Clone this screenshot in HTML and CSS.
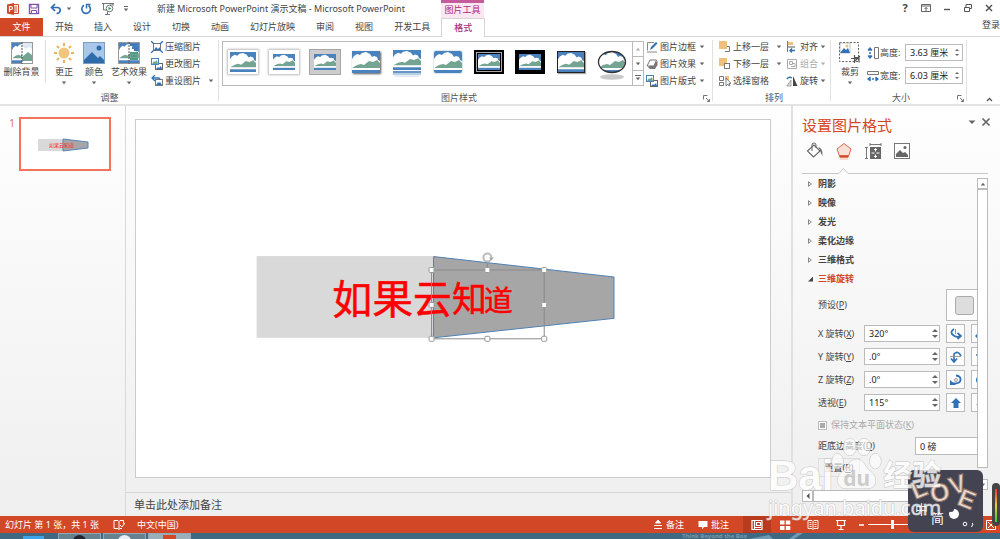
FILE: index.html
```html
<!DOCTYPE html>
<html lang="zh-CN">
<head>
<meta charset="utf-8">
<title>新建 Microsoft PowerPoint 演示文稿 - Microsoft PowerPoint</title>
<link rel="stylesheet" href="styles.css">
</head>
<body>
<svg class="defs" aria-hidden="true">
  <symbol id="pic" viewBox="0 0 28 22" preserveAspectRatio="none">
    <rect width="28" height="22" fill="#fff"/>
    <path d="M0 0h28v10l-2-1-1-3-3-1-2 1-2-3-4-2-4 1-2 2-3-1-3 2-2 3-2 0z" fill="#4a82bd"/>
    <path d="M0 17l5-3 4-1 3 1 5-4 4 1 4-2 3 3v5z" fill="#74a593"/>
    <path d="M0 17h28v2H0z" fill="#fff"/>
    <rect y="19" width="28" height="3" fill="#4a82bd"/>
  </symbol>
  <symbol id="down" viewBox="0 0 6 4"><path d="M0.8 0.5h4.4L3 3.3z" fill="#666"/></symbol>
  <symbol id="launch" viewBox="0 0 7 7"><path d="M.5 4.5v-4h4M3 3l2.5 2.5" fill="none" stroke="#777"/><path d="M7 3.5V7H3.5z" fill="#777"/></symbol>
  <symbol id="minipic" viewBox="0 0 12 12">
    <rect x="4.500" y="5.500" width="7" height="6" fill="#fff" stroke="#666"/><path d="M5 11l2-2 1 1 2-2 1 3z" fill="#2f72b8"/>
    <rect x=".5" y=".5" width="7" height="6" fill="#fff" stroke="#4a82bd"/><path d="M1 6l2-3 1 1 2-2 1 4z" fill="#74a593"/>
  </symbol>
</svg>

<div class="app">
  <header class="titlebar">
    <div class="qat">
      <svg class="i14" viewBox="0 0 14 14"><path d="M1 2.500L8 1v12L1 11.500z" fill="#d24726"/><path d="M8 2.500h4.500v9H8" fill="#fff" stroke="#d24726"/><path d="M8 5h3M8 7h3M8 9h3" stroke="#d24726"/><path d="M3.500 10V4.500h1.500a1.500 1.500 0 0 1 0 3H3.500" fill="none" stroke="#fff" stroke-width="1.200"/></svg>
      <button aria-label="保存"><svg class="i12" viewBox="0 0 12 12"><path d="M1.500 1.500h9v9h-9z" fill="#fff" stroke="#8055a8" stroke-width="1.400"/><path d="M3 1.500h6v3.500H3zM3.500 7.500h5v3h-5z" fill="#fff" stroke="#8055a8"/></svg></button>
      <button class="undo" aria-label="撤消"><svg class="i12" viewBox="0 0 12 12"><path d="M5 1L1.500 4.500 5 8M2 4.500h5.500c4 0 3.500 6-1 6" fill="none" stroke="#2f6db5" stroke-width="1.700"/></svg><svg class="dn"><use href="#down"/></svg></button>
      <button aria-label="重复"><svg class="i12" viewBox="0 0 12 12"><path d="M8.500 2.500A4.300 4.300 0 1 1 4 2.300" fill="none" stroke="#2f6db5" stroke-width="1.600"/><path d="M6.500 5.500V1.500h4" fill="none" stroke="#2f6db5" stroke-width="1.500"/></svg></button>
      <button class="show" aria-label="从头开始"><svg class="i14" viewBox="0 0 14 14"><path d="M1 1.500h12M2.500 2v6h4M6.500 9v3M4 12.500h5M9 2h3v2" fill="none" stroke="#777"/><circle cx="8.500" cy="6.500" r="3.300" fill="#fff" stroke="#777"/><path d="M7.500 4.700l3 1.800-3 1.800z" fill="#3c9b62"/></svg></button>
      <button aria-label="自定义快速访问工具栏"><svg class="i6" viewBox="0 0 6 6"><path d="M1 .5h4" stroke="#666"/><path d="M.8 2.500h4.400L3 5.300z" fill="#666"/></svg></button>
    </div>
    <h1 class="doc-title">新建 Microsoft PowerPoint 演示文稿 - Microsoft PowerPoint</h1>
    <div class="context-title">图片工具</div>
    <div class="win">
      <button aria-label="帮助" class="help">?</button>
      <button aria-label="功能区显示选项"><svg class="i10" viewBox="0 0 10 10"><path d="M.5 1.500h9v7h-9zM.5 3h9M5 8V4.500M3.500 6L5 4.500 6.500 6" fill="none" stroke="#666"/></svg></button>
      <button aria-label="最小化"><svg class="i10" viewBox="0 0 10 10"><path d="M2 6.500h6" stroke="#555" stroke-width="1.400"/></svg></button>
      <button aria-label="还原"><svg class="i10" viewBox="0 0 10 10"><path d="M1.500 4.500h5v4h-5zM3 4V1.500h5.500v4H7" fill="none" stroke="#555"/></svg></button>
      <button aria-label="关闭"><svg class="i10" viewBox="0 0 10 10"><path d="M2 2l6 6M8 2L2 8" stroke="#555" stroke-width="1.500"/></svg></button>
    </div>
  </header>

  <nav class="tabs">
    <button class="tab file">文件</button>
    <button class="tab">开始</button><button class="tab">插入</button><button class="tab">设计</button><button class="tab">切换</button><button class="tab">动画</button><button class="tab">幻灯片放映</button><button class="tab">审阅</button><button class="tab">视图</button><button class="tab">开发工具</button>
    <button class="tab active">格式</button>
    <a class="login" href="#">登录</a>
  </nav>

  <section class="ribbon">
    <div class="group g-adjust">
      <div class="tools">
        <button class="big w42"><svg class="i22" viewBox="0 0 22 22"><use href="#pic" x="1" y="1" width="20" height="20"/><rect x="11" y="1" width="10" height="20" fill="#fff"/><path d="M11 1h10v6l-3-2-3 2-4-3z" fill="#dfe9f4"/><path d="M11 15l6-5 4 3v6H11z" fill="#74a593"/><rect x=".5" y=".5" width="21" height="21" fill="none" stroke="#999"/><path d="M11 0v22" stroke="#555" stroke-dasharray="2 1"/></svg><span>删除背景</span></button>
        <i class="sep"></i>
        <button class="big w30"><svg class="i22" viewBox="0 0 22 22"><circle cx="11" cy="11" r="5.500" fill="#efc67c"/><g stroke="#e9b65f" stroke-width="2.200"><path d="M11 1v3M11 18v3M1 11h3M18 11h3M4 4l2 2M16 16l2 2M4 18l2-2M16 6l2-2"/></g></svg><span>更正</span><svg class="dn"><use href="#down"/></svg></button>
        <button class="big w30"><svg class="i22" viewBox="0 0 22 22"><rect x=".5" y=".5" width="21" height="21" fill="#a9c7e8" stroke="#7d9dc0"/><path d="M1 18l8-8 6 6 2-2 4 4v3H1z" fill="#2e6cac"/><circle cx="16" cy="6" r="2.500" fill="#2e6cac"/></svg><span>颜色</span><svg class="dn"><use href="#down"/></svg></button>
        <button class="big w40"><svg class="i22" viewBox="0 0 22 22"><use href="#pic" x="1" y="1" width="20" height="20"/><path d="M12 11h8M13 14h6M12 17h8" fill="none" stroke="#4d9c88" stroke-width="2"/><path d="M12 3h7M14 6h6M16 8h4" fill="none" stroke="#3c78bd" stroke-width="2"/><rect x=".5" y=".5" width="21" height="21" fill="none" stroke="#999"/><path d="M11 0v22" stroke="#555" stroke-dasharray="2 1"/></svg><span>艺术效果</span><svg class="dn"><use href="#down"/></svg></button>
        <div class="rows">
          <button class="row"><svg class="i12" viewBox="0 0 12 12"><rect x="2.500" y="2.500" width="7" height="7" fill="#fff" stroke="#777"/><path d="M3 9l2-3 2 2 2-2v3z" fill="#2f72b8"/><path d="M0 0l3 3M12 0L9 3M0 12l3-3M12 12L9 9" stroke="#2f72b8" stroke-width="1.300"/></svg><span>压缩图片</span></button>
          <button class="row"><svg class="i12"><use href="#minipic"/></svg><span>更改图片</span></button>
          <button class="row"><svg class="i12" viewBox="0 0 12 12"><rect x="4.500" y="4.500" width="7" height="6" fill="#fff" stroke="#777"/><path d="M5 10l2-3 1 1 1-1 2 3z" fill="#2f72b8"/><path d="M4 0L1 3l3 3M1 3h6q2 0 2 1.500" fill="none" stroke="#2f72b8" stroke-width="1.300"/></svg><span>重设图片</span><svg class="dn gap"><use href="#down"/></svg></button>
        </div>
      </div>
      <div class="caption">调整</div>
    </div>

    <div class="group g-styles">
      <div class="tools">
        <div class="gallery">
          <button class="thumb" aria-label="简单框架，白色"><svg class="frame white"><use href="#pic"/></svg></button>
          <button class="thumb" aria-label="棱台亚光，白色"><svg class="frame white thick"><use href="#pic"/></svg></button>
          <button class="thumb" aria-label="金属框架"><svg class="frame metal"><use href="#pic"/></svg></button>
          <button class="thumb" aria-label="矩形投影"><svg class="frame shadow"><use href="#pic"/></svg></button>
          <button class="thumb" aria-label="映像圆角矩形"><svg class="frame reflect" viewBox="0 0 28 28"><use href="#pic" width="28" height="20"/><path d="M0 21h28v2H0z" fill="#6796c7"/><path d="M0 23h28v2H0z" fill="#b8cfe4"/><path d="M1 25h26l-1 2H2z" fill="#e3edf5"/></svg></button>
          <button class="thumb" aria-label="柔化边缘矩形"><svg class="frame soft"><use href="#pic"/></svg></button>
          <button class="thumb" aria-label="双框架，黑色"><svg class="frame black dbl"><use href="#pic"/></svg></button>
          <button class="thumb" aria-label="厚重亚光，黑色"><svg class="frame black"><use href="#pic"/></svg></button>
          <button class="thumb" aria-label="简单框架，黑色"><svg class="frame line"><use href="#pic"/></svg></button>
          <button class="thumb" aria-label="棱台形椭圆，黑色"><svg class="oval" viewBox="0 0 30 30"><clipPath id="ov"><ellipse cx="15" cy="12" rx="13.500" ry="10.500"/></clipPath><ellipse cx="15" cy="27" rx="12" ry="2.800" fill="#c9c9c9"/><g clip-path="url(#ov)"><use href="#pic" x="1" y="1" width="28" height="22"/></g><ellipse cx="15" cy="12" rx="13.500" ry="10.500" fill="none" stroke="#333" stroke-width="1.300"/></svg></button>
          <div class="gal-nav">
            <button aria-label="上一行"><svg class="dn flip faint"><use href="#down"/></svg></button>
            <button aria-label="下一行"><svg class="dn"><use href="#down"/></svg></button>
            <button aria-label="其他"><svg class="i6" viewBox="0 0 6 6"><path d="M0 .5h6" stroke="#666"/><path d="M.8 2.500h4.400L3 5.300z" fill="#666"/></svg></button>
          </div>
        </div>
        <div class="rows">
          <button class="row"><svg class="i12" viewBox="0 0 12 12"><path d="M8 1.500H1.500v8M1 11h10" fill="none" stroke="#888"/><path d="M4 9l1-3 5-5 1.500 1.500-5 5z" fill="#2f72b8"/></svg><span>图片边框</span><svg class="dn"><use href="#down"/></svg></button>
          <button class="row"><svg class="i12" viewBox="0 0 12 12"><path d="M2 9l2 2h5l2.500-4V3z" fill="#777"/><path d="M4 2h6.500L8 8H1z" fill="#fff" stroke="#777"/></svg><span>图片效果</span><svg class="dn"><use href="#down"/></svg></button>
          <button class="row"><svg class="i12"><use href="#minipic"/></svg><span>图片版式</span><svg class="dn"><use href="#down"/></svg></button>
        </div>
      </div>
      <div class="caption shift">图片样式</div>
      <button class="launcher" aria-label="图片样式对话框"><svg class="i7"><use href="#launch"/></svg></button>
    </div>

    <div class="group g-arrange">
      <div class="tools">
        <div class="rows">
          <button class="row"><svg class="i12" viewBox="0 0 12 12"><path d="M7 5.500h3.500v5H6" fill="none" stroke="#777"/><rect x="0" y="0" width="8" height="8" fill="#eec07a"/></svg><span>上移一层</span><svg class="dn gap"><use href="#down"/></svg></button>
          <button class="row"><svg class="i12" viewBox="0 0 12 12"><rect x="0" y="0" width="8" height="8" fill="#eec07a"/><rect x="5.500" y="5.500" width="5" height="5" fill="#fff" stroke="#777"/></svg><span>下移一层</span><svg class="dn gap"><use href="#down"/></svg></button>
          <button class="row"><svg class="i12" viewBox="0 0 12 12"><path d="M.5 1.500h4v4h-4zM.5 7.500h4v3h-4z" fill="none" stroke="#777"/><path d="M6 1h4v4H6z" fill="#eec07a"/><path d="M7 3v8l2-2 1 2 1-.5-1-2h2z" fill="#fff" stroke="#666" stroke-width=".8"/></svg><span>选择窗格</span></button>
        </div>
        <div class="rows">
          <button class="row tight"><svg class="i12" viewBox="0 0 12 12"><path d="M1.500 0v11" stroke="#777"/><path d="M2 1h5v3H2z" fill="#eec07a"/><path d="M2 5h7v2H2z" fill="#aaa"/><path d="M9 9.500H4M6 7.500l-2 2 2 2" fill="none" stroke="#2f72b8" stroke-width="1.400"/></svg><span>对齐</span><svg class="dn"><use href="#down"/></svg></button>
          <button class="row tight off" disabled><svg class="i12" viewBox="0 0 12 12"><path d="M1.500 1.500h9v9h-9zM3.500 3.500h3v3h-3zM6 5.500h3v3H5" fill="none" stroke="#aaa"/></svg><span>组合</span><svg class="dn faint"><use href="#down"/></svg></button>
          <button class="row tight"><svg class="i12" viewBox="0 0 12 12"><path d="M7 1v10h4.500z" fill="#444"/><path d="M5 5v6H.8z" fill="#ddd" stroke="#888" stroke-width=".7"/><path d="M1 4q2-3 5-1" fill="none" stroke="#2f72b8" stroke-width="1.400"/></svg><span>旋转</span><svg class="dn"><use href="#down"/></svg></button>
        </div>
      </div>
      <div class="caption">排列</div>
    </div>

    <div class="group g-size">
      <div class="tools">
        <button class="big w30"><svg class="i22" viewBox="0 0 22 22"><rect x=".5" y=".5" width="19" height="19" fill="none" stroke="#666" stroke-dasharray="2 1.500"/><rect x="1" y="1" width="10" height="10" fill="#fff" stroke="#9a9a9a" stroke-width=".6"/><path d="M1 11l4-5 2 2 2-2 2 5z" fill="#2f72b8"/><circle cx="8" cy="4" r="1.500" fill="#eec07a"/><path d="M12 16.500h8M15.500 13v8M15 15.500h5v5M21 14l-5 5" fill="none" stroke="#555" stroke-width="1.200"/></svg><span>裁剪</span><svg class="dn"><use href="#down"/></svg></button>
        <div class="sizes">
          <div class="size"><svg class="i12" viewBox="0 0 12 12"><path d="M3 1v3M3 8v3M1 3.500L3 1l2 2.500M1 8.500L3 11l2-2.500" fill="none" stroke="#2f72b8" stroke-width="1.300"/><circle cx="3" cy="6" r="1" fill="#2f72b8"/><path d="M7.500.5h4v11h-4z" fill="none" stroke="#777"/></svg><label for="h">高度:</label><span class="spin"><input id="h" value="3.63 厘米"><i></i></span></div>
          <div class="size"><svg class="i12" viewBox="0 0 12 12"><path d="M1 9h3M8 9h3M3.500 7L1 9l2.500 2M8.500 7L11 9l-2.500 2" fill="none" stroke="#2f72b8" stroke-width="1.300"/><circle cx="6" cy="9" r="1" fill="#2f72b8"/><path d="M.5 1.500h11v3H.5z" fill="none" stroke="#777"/></svg><label for="w">宽度:</label><span class="spin"><input id="w" value="6.03 厘米"><i></i></span></div>
        </div>
      </div>
      <div class="caption">大小</div>
      <button class="launcher" aria-label="大小对话框"><svg class="i7"><use href="#launch"/></svg></button>
    </div>
    <button class="collapse" aria-label="折叠功能区"><svg class="i7" viewBox="0 0 7 7"><path d="M1 5l2.500-2.500L6 5" fill="none" stroke="#555" stroke-width="1.300"/></svg></button>
  </section>

  <main class="main">
    <aside class="slides">
      <span class="num">1</span>
      <svg class="slide-thumb" viewBox="0 0 88 50"><rect width="88" height="50" fill="#fff"/><rect x="17" y="20" width="25" height="12" fill="#d9d9d9"/><path d="M42 20l25 3v6l-25 3z" fill="#a6a6a6" stroke="#5b86b5"/><text x="28" y="28" font-size="5" fill="#f22">如果云知道</text></svg>
    </aside>

    <section class="work">
      <div class="canvas">
        <svg class="slide" viewBox="0 0 636 358" role="img" aria-label="幻灯片">
          <rect x="121" y="136.500" width="177" height="82" fill="#d9d9d9"/>
          <path d="M298.500 137L479.500 157.500V199L298.500 218.500z" fill="#a6a6a6" stroke="#4e7fb3"/>
          <g class="art" fill="#f00" stroke="#f00" stroke-width=".5">
            <text x="197" y="195" font-size="40">如</text><text x="237" y="195" font-size="41">果</text><text x="278" y="194" font-size="39">云</text><text x="317" y="193" font-size="35">知</text><text x="349" y="192" font-size="29">道</text>
          </g>
          <g fill="none" stroke="#8a8a8a"><path d="M296.500 150.500h113v69h-113zM352.500 150v-7"/></g>
          <circle cx="352.500" cy="138" r="4" fill="none" stroke="#bbb" stroke-width="2"/><path d="M354 138h5l-2.500 3z" fill="#aaa"/>
          <g fill="#fff" stroke="#999"><rect x="294" y="148" width="5" height="5" rx="1"/><rect x="350" y="148" width="5" height="5" rx="1"/><rect x="407" y="148" width="5" height="5" rx="1"/><rect x="294" y="183" width="5" height="5" rx="1"/><rect x="407" y="183" width="5" height="5" rx="1"/><rect x="294" y="217" width="5" height="5" rx="1"/><rect x="350" y="217" width="5" height="5" rx="1"/><rect x="407" y="217" width="5" height="5" rx="1"/></g>
        </svg>
      </div>
      <div class="notes">单击此处添加备注</div>
    </section>

    <aside class="pane">
      <div class="pane-head">
        <h2>设置图片格式</h2>
        <button aria-label="任务窗格选项"><svg class="i10" viewBox="0 0 10 10"><path d="M1.500 3.500h7L5 7z" fill="#666"/></svg></button>
        <button aria-label="关闭窗格"><svg class="i10" viewBox="0 0 10 10"><path d="M1.500 1.500l7 7M8.500 1.500l-7 7" stroke="#666" stroke-width="1.700"/></svg></button>
      </div>
      <div class="pane-tabs">
        <button aria-label="填充与线条"><svg class="i18" viewBox="0 0 18 18"><path d="M1.500 9L8 3l6 6-6.500 6z" fill="#fff" stroke="#666" stroke-width="1.100"/><path d="M6 9V3q0-2 2-2t2 2v3" fill="none" stroke="#666"/><path d="M12 5q5 1 4.500 9-2-3-2.500-6z" fill="#666"/></svg></button>
        <button aria-label="效果" class="on"><svg class="i18" viewBox="0 0 18 18"><path d="M9 1.500L16 7l-2.500 7h-9L2 7z" fill="#f8e0d8" stroke="#dd6549"/><path d="M4.500 14.500h9" stroke="#d24726" stroke-width="2.400"/><path d="M5 17h8" stroke="#f0b7a8"/></svg></button>
        <button aria-label="大小与属性"><svg class="i18" viewBox="0 0 18 18"><path d="M6 2.500h11M6 1v3M17 1v3M2.500 6v10M1 5.500h3M1 16.500h3" fill="none" stroke="#777"/><rect x="6" y="5" width="11" height="12" fill="#666"/><path d="M11.500 6.500v3M11.500 12.500v3M7.500 11h3M12.500 11h3M10 8l1.500-1.500L13 8M10 14l1.500 1.500L13 14" fill="none" stroke="#fff"/></svg></button>
        <button aria-label="图片"><svg class="i18" viewBox="0 0 18 18"><rect x="1.500" y="1.500" width="15" height="15" fill="#fff" stroke="#777"/><path d="M3 15v-3l4-4 3 3 2-1 3 3v2z" fill="#666"/><circle cx="12" cy="5.500" r="1.500" fill="#666"/></svg></button>
      </div>
      <svg class="notch" viewBox="0 0 186 7"><path d="M0 6.500h37l4.500-5 4.500 5h140" fill="none" stroke="#c8c8c8"/></svg>
      <div class="pane-body">
        <div class="pane-scroll">
          <button class="sect">阴影</button><button class="sect">映像</button><button class="sect">发光</button><button class="sect">柔化边缘</button><button class="sect">三维格式</button><button class="sect open">三维旋转</button>
          <div class="preset"><label for="ps">预设(<u>P</u>)</label><button id="ps" class="preset-btn" aria-label="预设"><i></i></button></div>
          <div class="field"><label for="rx">X 旋转(<u>X</u>)</label><span class="spin"><input id="rx" value="320°"><i></i></span><button class="sq" aria-label="向左"><svg class="i12" viewBox="0 0 12 12"><path d="M4 1Q-.5 4 3 7t7 1M7.500 5l3.500 3-3.500 3" fill="none" stroke="#2f72b8" stroke-width="1.700"/><path d="M5.500 1v5" stroke="#999"/></svg></button><button class="sq" aria-label="向右"><svg class="i12" viewBox="0 0 12 12"><path d="M10 1q2 4-8 7M4 5L1 8l3 3" fill="none" stroke="#2f72b8" stroke-width="1.500"/></svg></button></div>
          <div class="field"><label for="ry">Y 旋转(<u>Y</u>)</label><span class="spin"><input id="ry" value=".0°"><i></i></span><button class="sq" aria-label="向上"><svg class="i12" viewBox="0 0 12 12"><path d="M11 5Q8-1 4 3v8M1 7.500l3 3.500 3-3.500" fill="none" stroke="#2f72b8" stroke-width="1.700"/><path d="M0 5.500h11" stroke="#999"/></svg></button><button class="sq" aria-label="向下"><svg class="i12" viewBox="0 0 12 12"><path d="M1 4h8" stroke="#2f72b8" stroke-width="1.500"/></svg></button></div>
          <div class="field"><label for="rz">Z 旋转(<u>Z</u>)</label><span class="spin"><input id="rz" value=".0°"><i></i></span><button class="sq" aria-label="顺时针"><svg class="i12" viewBox="0 0 12 12"><path d="M6 1.500q5 .5 4.500 4.500T3 9.500" fill="none" stroke="#2f72b8" stroke-width="1.900"/><path d="M0 6v5h6z" fill="#2f72b8"/><circle cx="6" cy="6" r="1.500" fill="none" stroke="#999"/></svg></button><button class="sq" aria-label="逆时针"><svg class="i12" viewBox="0 0 12 12"><circle cx="6" cy="6" r="4" fill="none" stroke="#2f72b8" stroke-width="2"/></svg></button></div>
          <div class="field"><label for="pv">透视(<u>E</u>)</label><span class="spin"><input id="pv" value="115°"><i></i></span><button class="sq" aria-label="缩小视野"><svg class="i12" viewBox="0 0 12 12"><path d="M6 1l5 5H8.500v5h-5V6H1z" fill="#2f72b8"/></svg></button><button class="sq" aria-label="放大视野"><svg class="i12" viewBox="0 0 12 12"><path d="M1 7h10L6 11z" fill="#2f72b8"/></svg></button></div>
          <label class="keep"><input type="checkbox" disabled><span>保持文本平面状态(<u>K</u>)</span></label>
          <div class="dist"><label for="ds">距底边高度(<u>D</u>)</label><input id="ds" value="0 磅"></div>
          <button class="reset">重置(<u>R</u>)</button>
        </div>
        <div class="vbar"><button aria-label="向上滚动"><svg class="dn flip"><use href="#down"/></svg></button><i></i><button aria-label="向下滚动"><svg class="dn"><use href="#down"/></svg></button></div>
      </div>
      <div class="hbar"><button aria-label="向左滚动"><svg class="i6" viewBox="0 0 6 6"><path d="M4.500 0v6L1.500 3z" fill="#555"/></svg></button><i></i></div>
    </aside>
  </main>

  <footer class="status">
    <span>幻灯片 第 1 张，共 1 张</span>
    <button class="spell" aria-label="拼写检查"><svg class="i12" viewBox="0 0 12 12"><path d="M6 2.500L5 1.500H1v8h4l1 1 1-1h2M6 2.500v8M6 2.500l1-1h3.500v3M7 6l2 2 3-4" fill="none" stroke="#fff"/></svg></button>
    <span>中文(中国)</span>
    <div class="views">
      <button class="txt"><svg class="i10" viewBox="0 0 10 10"><path d="M5 0l2.500 3h-5zM1 5.500h8M1 8.500h8" fill="#fff" stroke="#fff"/></svg>备注</button>
      <button class="txt"><svg class="i10" viewBox="0 0 10 10"><path d="M.5 1h9v6H6l-2 2.500V7H.5z" fill="#fff"/></svg>批注</button>
      <button class="view on" aria-label="普通视图"><svg class="i12" viewBox="0 0 12 12"><path d="M1 1.500h10v9H1zM3.500 1.500v9M5.500 3.500h4v3h-4zM4 8.500h6" fill="none" stroke="#fff" stroke-width="1.200"/></svg></button>
      <button class="view" aria-label="幻灯片浏览"><svg class="i12" viewBox="0 0 12 12"><path d="M1 1.500h4.500v4H1zM6.800 1.500h4.500v4H6.800zM1 7h4.500v4H1zM6.800 7h4.500v4H6.800z" fill="#fff"/></svg></button>
      <button class="view" aria-label="阅读视图"><svg class="i12" viewBox="0 0 12 12"><path d="M1 1.500h4l1 1 1-1h4v8H7l-1 1-1-1H1zM6 2.500v8M2.500 3.500h2M2.500 5.500h2M2.500 7.500h2M7.500 3.500h2M7.500 5.500h2M7.500 7.500h2" fill="none" stroke="#fff" stroke-width=".9"/></svg></button>
      <button class="view" aria-label="幻灯片放映"><svg class="i12" viewBox="0 0 12 12"><path d="M1 1.500h10M2.500 2v4.500h7V2M6 7v3M3.500 10.500h5" fill="none" stroke="#fff" stroke-width="1.200"/></svg></button>
      <button class="minus" aria-label="缩小"><svg class="i6" viewBox="0 0 6 6"><path d="M0 3h5" stroke="#fff" stroke-width="1.500"/></svg></button>
      <input class="zoom" type="range" aria-label="显示比例" value="50">
      <button class="fit" aria-label="适应窗口"><svg class="i10" viewBox="0 0 10 10"><path d="M.5.5h9v9h-9zM2 2l6 6M8 2L2 8" fill="none" stroke="#fff"/></svg></button>
    </div>
  </footer>
  <div class="taskbar">
    <i class="t1"></i><i class="t2"><b class="dark"></b></i><i class="t2"><b></b></i><i class="t2 lit"><b class="red"></b></i>
    <span>Think Beyond the Box</span>
    <svg viewBox="0 0 80 6" preserveAspectRatio="none"><path d="M0 6L20 2l4 4zM40 6l8-6h6l-9 6z" fill="#8fb9d3" opacity=".6"/></svg>
  </div>

  <div class="ime">
    <svg viewBox="0 0 75 62"><g font-weight="700" font-size="25" fill="#e9d9cc" stroke="#94786c" stroke-width="1"><text x="3" y="27" transform="rotate(-22 12 18)">L</text><text x="22" y="31" transform="rotate(-12 32 22)">O</text><text x="41" y="23" transform="rotate(-18 50 14)">V</text><text x="51" y="38" transform="rotate(22 60 28)">E</text></g><g fill="#fff"><text x="7" y="44" font-size="13">中</text><text x="23" y="53" font-size="13">简</text><circle cx="46" cy="44" r="5"/><circle cx="43" cy="39" r="3" fill="#434351"/><circle cx="57" cy="54" r="1.800" fill="none" stroke="#fff"/><path d="M64 53l1 1-1.500 3" fill="none" stroke="#fff"/></g></svg>
  </div>
  <div class="watermark" aria-hidden="true">
    <div class="wm-top"><span>Bai</span>
      <svg viewBox="0 0 54 58"><g fill="#fff" fill-opacity=".75" stroke="#bbb"><ellipse cx="20" cy="10" rx="7" ry="9"/><ellipse cx="35" cy="10" rx="7" ry="9"/><ellipse cx="7" cy="25" rx="6" ry="8"/><ellipse cx="47" cy="25" rx="6" ry="8"/><path d="M27 23c-9 0-9 9-15 13-7 5-7 17 3 18h24c11-1 10-13 3-18-6-4-6-13-15-13z"/></g><text x="13" y="51" font-size="22" font-weight="700" fill="#c4c4c4">du</text></svg>
      <span class="wm-cn">经验</span></div>
    <div class="wm-url">jingyan.baidu.com</div>
  </div>
  <div class="meter"><i></i></div>
</div>
</body>
</html>
```
FILE: styles.css
```css
* { box-sizing: border-box; }
body { margin: 0; background: #fff; color: #444; font: 9px/12px "Noto Sans", "Noto Sans CJK SC", sans-serif; }
button, input { font: inherit; color: inherit; margin: 0; }
button { display: inline-flex; align-items: center; justify-content: center; padding: 0; border: 0; background: none; white-space: nowrap; }
svg { display: block; flex: none; }
h1, h2 { margin: 0; font-weight: 400; }
.defs { position: absolute; width: 0; height: 0; }
.i6 { width: 6px; height: 6px; }
.i7 { width: 7px; height: 7px; }
.i10 { width: 10px; height: 10px; }
.i12 { width: 12px; height: 12px; }
.i14 { width: 14px; height: 14px; }
.i18 { width: 18px; height: 18px; }
.i22 { width: 22px; height: 22px; }
.dn { width: 6px; height: 4px; }
.flip { transform: rotate(180deg); }
.faint { opacity: .5; }

.app { position: relative; display: flex; flex-direction: column; min-height: 100vh; overflow: hidden; }

.titlebar { display: flex; height: 18px; }
.qat { display: flex; align-items: center; width: 157px; padding-left: 6px; gap: 8px; }
.qat .undo { gap: 4px; margin-left: 2px; }
.qat .show { margin-left: 1px; }
.doc-title { width: 284px; font-size: 9px; line-height: 17px; white-space: nowrap; }
.context-title { width: 43px; border-top: 3px solid #c55a9d; background: #fbe6f2; color: #a82c7c; line-height: 13px; text-align: center; }
.win { display: flex; align-items: center; gap: 11px; margin-left: auto; padding-right: 6px; height: 16px; }
.help { width: 10px; font-size: 11px; font-weight: 700; }

.tabs { display: flex; height: 19px; border-bottom: 1px solid #d5d5d5; }
.tab { padding: 0 10px; margin-right: 1px; }
.tab.file { width: 43px; margin-right: 2px; background: #d24726; color: #fff; }
.tab.active { width: 44px; height: 19px; background: #fff; border: 1px solid #d5d5d5; border-width: 1px 1px 0; color: #a82c7c; font-weight: 500; }
.login { margin-left: auto; color: inherit; text-decoration: none; line-height: 13px; }

.ribbon { display: flex; height: 69px; border-bottom: 2px solid #e5e5e5; }
.group { position: relative; display: flex; flex-direction: column; padding-top: 3px; }
.group::after { content: ""; position: absolute; right: 0; top: 3px; bottom: 3px; width: 1px; background: #e1e1e1; }
.g-adjust { width: 219px; }
.g-styles { width: 494px; padding-left: 3px; }
.g-arrange { width: 118px; padding-left: 4px; }
.g-size { width: 136px; padding-left: 4px; }
.tools { display: flex; height: 51px; }
.caption { text-align: center; line-height: 13px; color: #555; }
.caption.shift { padding-right: 17px; }
.launcher { position: absolute; right: 3px; bottom: 2px; }
.collapse { margin: auto 7px 1px auto; }
.big { flex-direction: column; justify-content: flex-start; padding-top: 2px; }
.big span { line-height: 16px; }
.big .dn { margin-top: 1px; }
.w42 { width: 43px; }
.w30 { width: 30px; }
.w40 { width: 40px; }
.sep { width: 1px; height: 42px; margin: 0 3px 0 2px; background: #ddd; }
.rows { display: flex; flex-direction: column; align-items: flex-start; }
.row { height: 17px; padding-left: 2px; gap: 2px; padding-bottom: 3px; }
.row .dn { margin-left: 1px; }
.row .dn.gap { margin-left: 5px; }
.tight { padding-left: 4px; gap: 2px; }
.tight .dn { margin-left: 0; }
.off { color: #aaa; }

.gallery { display: flex; width: 422px; height: 45px; border: 1px solid #bbb; margin-top: 1px; }
.thumb { flex: 1; padding-bottom: 4px; }
.frame { width: 28px; height: 22px; box-sizing: content-box; }
.white { width: 26px; height: 20px; border: 2px solid #fff; box-shadow: 0 0 2px 1px #bbb; }
.white.thick { width: 22px; height: 16px; border-width: 4px; }
.metal { width: 22px; height: 16px; border: 4px solid #ccc; outline: 1px solid #a5a5a5; }
.shadow { box-shadow: 1px 1px 2px #555; }
.reflect { height: 28px; margin-top: 4px; }
.soft { border-radius: 2px; box-shadow: 0 0 1px 1px #dbe6f2; }
.black { width: 22px; height: 16px; border: 4px solid #000; }
.dbl { outline: 1px solid #aaa; outline-offset: -3px; }
.line { width: 26px; height: 20px; border: 1px solid #222; box-shadow: 1px 1px 1px #aaa; }
.oval { width: 30px; height: 30px; margin-top: 6px; }
.gal-nav { display: flex; flex-direction: column; width: 11px; border-left: 1px solid #bbb; }
.gal-nav button { flex: 1; }
.gal-nav button + button { border-top: 1px solid #bbb; }

.sizes { display: flex; flex-direction: column; gap: 6px; padding: 4px 0 0 2px; }
.size { display: flex; align-items: center; gap: 1px; height: 17px; }
.size label { width: 24px; white-space: nowrap; }
.spin { display: flex; position: relative; }
.spin input { width: 58px; height: 17px; border: 1px solid #bbb; padding: 0 4px; background: #fff; color: #222; }
.spin i { position: absolute; right: 3px; top: 4px; bottom: 4px; width: 5px; }
.spin i::before, .spin i::after { content: ""; position: absolute; left: 0; border: 3px solid transparent; }
.spin i::before { top: -3px; border-bottom-color: #666; }
.spin i::after { bottom: -3px; border-top-color: #666; }
.size .spin i::before, .size .spin i::after { border-width: 2px; }
.size .spin i::before { top: -1px; }
.size .spin i::after { bottom: -1px; }

.main { flex: 1; display: flex; min-height: 0; background: linear-gradient(#fefefe, #efefef); }
.slides { display: flex; width: 126px; padding: 11px 14px 0 8px; gap: 3px; border-right: 1px solid #d9d9d9; align-items: flex-start; }
.num { width: 8px; color: #e0705a; font-size: 10px; text-align: center; }
.slide-thumb { flex: 1; width: 92px; border: 2px solid #f4745a; }
.work { flex: 1; display: flex; flex-direction: column; min-width: 0; }
.canvas { flex: 1; padding: 13px 20px 0 9px; }
.slide { width: 100%; border: 1px solid #ccc; background: #fff; }
.art { font-family: "Noto Sans CJK SC", sans-serif; }
.notes { height: 24px; padding-left: 8px; border-top: 1px solid #d5d5d5; font-size: 11px; line-height: 24px; }

.pane { width: 209px; display: flex; flex-direction: column; padding: 8px 12px 0 9px; border-left: 2px solid #e0e0e0; }
.pane-head { display: flex; height: 25px; gap: 4px; align-items: flex-start; }
.pane-head h2 { flex: 1; color: #d24726; font-size: 15px; line-height: 22px; }
.pane-head button { height: 16px; }
.pane-head button:last-child { margin-right: -3px; }
.pane-tabs { display: flex; gap: 11px; padding: 3px 0 0 4px; height: 28px; align-items: flex-start; }
.notch { width: 100%; height: 7px; }
.pane-body { display: flex; height: 316px; padding-top: 4px; }
.pane-scroll { flex: 1; min-width: 0; overflow: hidden; padding-left: 4px; }
.sect { display: flex; justify-content: flex-start; width: 100%; height: 19px; padding-bottom: 7px; font-weight: 700; }
.sect::before { content: ""; width: 4px; height: 6px; margin: 0 6px 0 2px; background: #888; clip-path: polygon(0 0, 100% 50%, 0 100%, 0 0, 1px 2px, 1px 4px, 3px 3px, 1px 2px); }
.sect.open { color: #d24726; }
.sect.open::before { width: 5px; height: 5px; margin-right: 5px; background: #444; clip-path: polygon(100% 0, 100% 100%, 0 100%); }
.preset, .field, .dist { display: flex; align-items: center; padding-left: 12px; white-space: nowrap; }
.preset { height: 26px; margin-bottom: 6px; }
.preset label { width: 128px; flex: none; }
.preset-btn { flex: none; width: 40px; height: 32px; border: 1px solid #bbb; background: #fdfdfd; }
.preset-btn i { width: 19px; height: 19px; border: 1px solid #aaa; border-radius: 3px; background: #ddd; margin-right: 4px; }
.field { height: 19px; margin-bottom: 4px; }
.field label { width: 46px; flex: none; }
.field .spin { margin-right: 6px; }
.field .spin input { width: 76px; height: 17px; }
.sq { flex: none; width: 19px; height: 19px; margin-right: 6px; border: 1px solid #bbb; background: #fdfdfd; }
.keep { display: flex; align-items: center; gap: 4px; padding: 1px 0 0 12px; height: 17px; color: #aaa; white-space: nowrap; }
.keep input { appearance: none; width: 9px; height: 9px; margin: 0; border: 1px solid #bbb; background: #aaa; box-shadow: inset 0 0 0 1px #fff; }
.dist { height: 20px; margin-top: 3px; }
.dist label { width: 97px; flex: none; }
.dist input { width: 70px; height: 18px; flex: none; border: 1px solid #bbb; padding: 0 4px; color: #222; }
.reset { width: 42px; height: 19px; margin: 2px 0 0 12px; border: 1px solid #ddd; }
.vbar { display: flex; flex-direction: column; width: 11px; }
.vbar button { height: 11px; border: 1px solid #bbb; background: #fff; }
.vbar i { flex: 1; border: 1px solid #bbb; background: #fff; margin-bottom: 11px; }
.hbar { display: flex; height: 12px; margin-right: 11px; }
.hbar button { width: 11px; border: 1px solid #bbb; background: #fff; }
.hbar i { flex: 1; border: 1px solid #bbb; background: #fff; }

.status { display: flex; align-items: center; height: 17px; padding-left: 5px; background: #d24726; color: #fff; white-space: nowrap; }
.spell { margin: 0 12px 0 14px; }
.views { display: flex; align-items: center; margin-left: auto; padding-right: 5px; height: 100%; }
.txt { gap: 3px; margin-right: 14px; }
.view { width: 28px; height: 100%; }
.view.on { background: #b83b1d; }
.minus { margin: 0 3px 0 4px; }
.zoom { appearance: none; width: 48px; height: 11px; margin: 0 70px 0 0; background: linear-gradient(#fff, #fff) center / 100% 1px no-repeat; }
.zoom::-webkit-slider-thumb { appearance: none; width: 3px; height: 9px; background: #fff; }
.fit { margin-right: -1px; }
.taskbar { display: flex; height: 6px; padding-left: 23px; gap: 2px; overflow: hidden; background: #3f6982; }
.taskbar .t1 { width: 21px; margin: 3px 12px 0 0; background: #3fa5ea; }
.t2 { display: flex; justify-content: center; width: 43px; border: 1px solid #93a8b4; border-bottom: 0; background: #66818f; }
.t2.lit { background: #9aafb9; }
.t2 b { width: 13px; height: 12px; margin-top: 1px; border-radius: 50%; background: #e8eef5; }
.t2 .dark { background: #20242e; }
.t2 .red { border-radius: 0; background: #d24726; }
.taskbar span { margin-left: 489px; color: #7898ac; font: 700 6px/6px "Noto Sans", sans-serif; white-space: nowrap; }
.taskbar svg { width: 80px; height: 6px; }

.watermark { position: absolute; right: 52px; bottom: 20px; width: 180px; color: #fff; -webkit-text-stroke: 1px #bbb; paint-order: stroke fill; opacity: .8; pointer-events: none; }
.wm-top { display: flex; align-items: flex-end; height: 62px; white-space: nowrap; }
.wm-top span { font: 700 42px/42px "Liberation Sans", sans-serif; }
.wm-top svg { width: 51px; height: 56px; margin: 0 1px 4px -2px; -webkit-text-stroke: 0; }
.wm-top .wm-cn { font: 700 29px/48px "Noto Sans CJK SC", sans-serif; }
.wm-url { font: 20px/22px "Noto Sans", sans-serif; }
.ime { position: absolute; right: 17px; bottom: 7px; width: 75px; height: 62px; border-radius: 6px; background: #434351; font-family: "Liberation Sans", "Noto Sans CJK SC", sans-serif; }
.meter { position: absolute; right: 0; bottom: 13px; width: 8px; height: 43px; padding: 6px 3px 4px; border-radius: 4px; background: #444; }
.meter i { display: block; height: 100%; background: linear-gradient(#e33, #ec3, #3c4); }
```
